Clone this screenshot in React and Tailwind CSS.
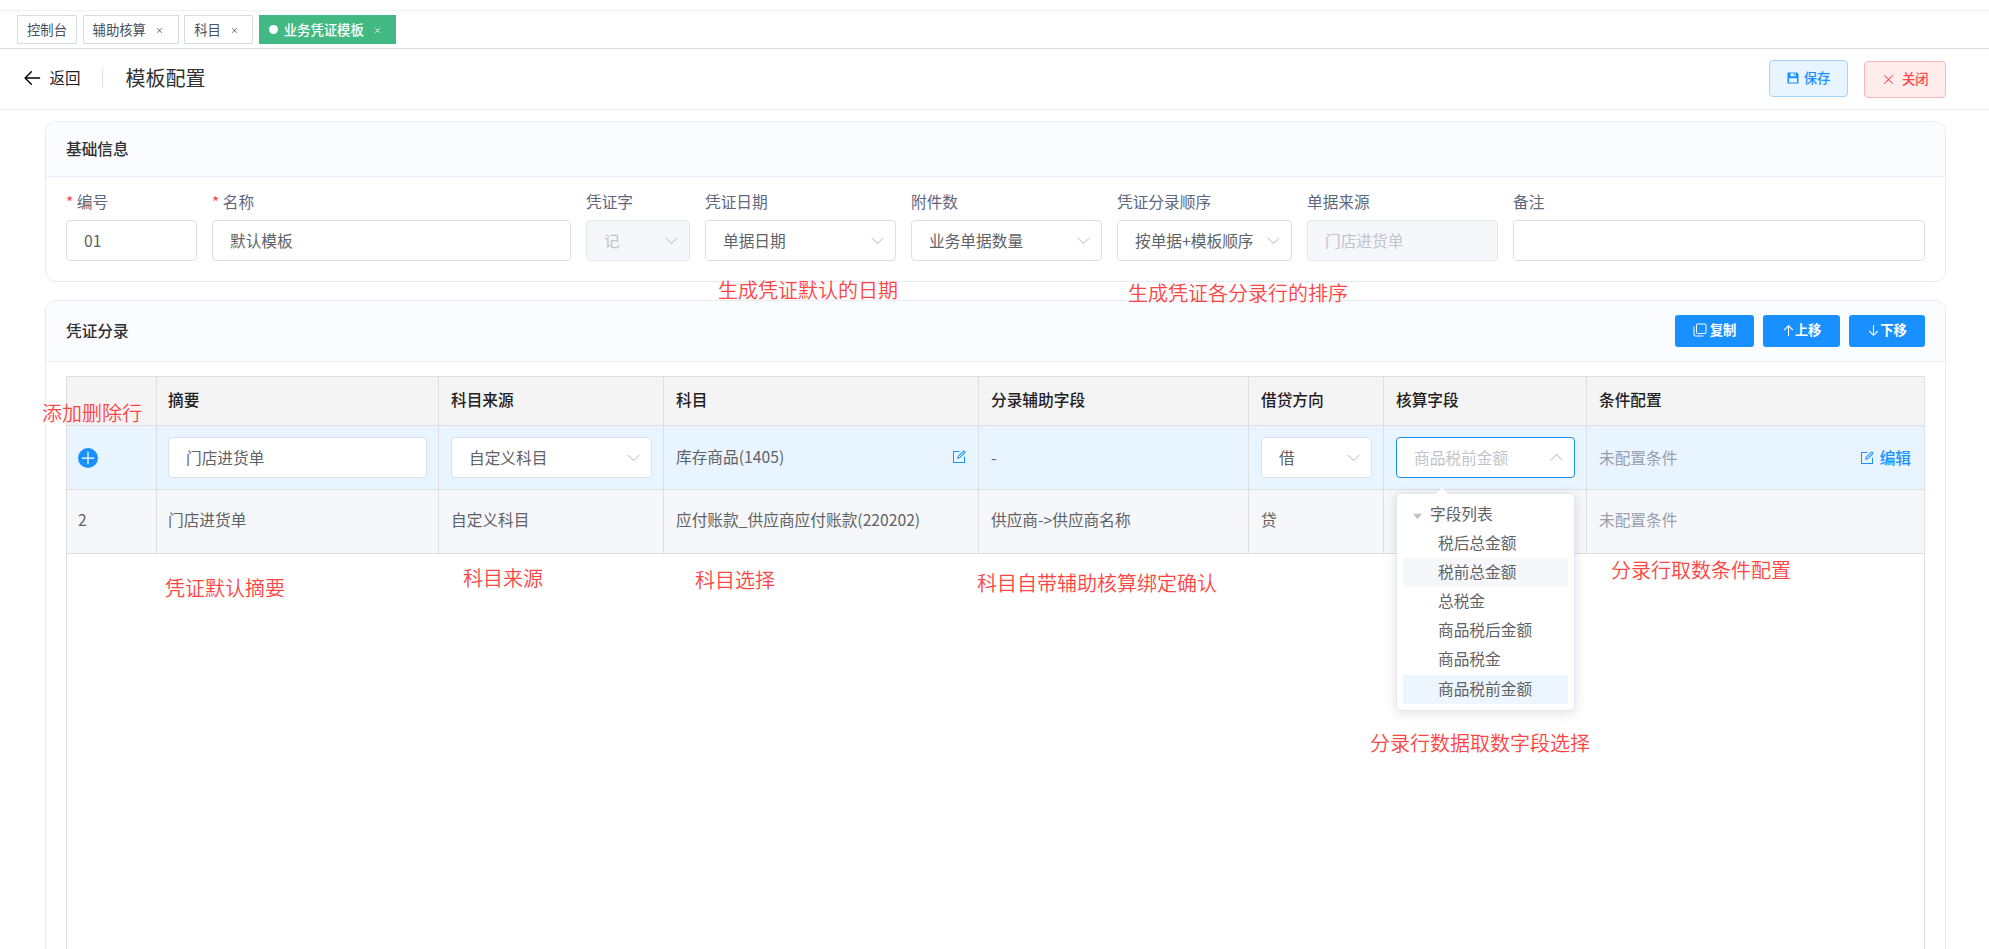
const ICONS = {
  arrowDown: [
    'M831.872 340.864 512 652.672 192.128 340.864a30.592 30.592 0 0 0-42.752 0 29.12 29.12 0 0 0 0 41.6L489.664 714.24a32 32 0 0 0 44.672 0l340.288-331.712a29.12 29.12 0 0 0 0-41.728 30.592 30.592 0 0 0-42.752 0z',
  ],
  back: [
    'M224 480h640a32 32 0 1 1 0 64H224a32 32 0 0 1 0-64z',
    'm237.248 512 265.408 265.344a32 32 0 0 1-45.312 45.312l-288-288a32 32 0 0 1 0-45.312l288-288a32 32 0 1 1 45.312 45.312L237.248 512z',
  ],
  edit: [
    'M832 512a32 32 0 1 1 64 0v352a32 32 0 0 1-32 32H160a32 32 0 0 1-32-32V160a32 32 0 0 1 32-32h352a32 32 0 0 1 0 64H192v640h640V512z',
    'm469.952 554.24 52.8-7.552L847.104 222.4a32 32 0 1 0-45.248-45.248L477.44 501.44l-7.552 52.8zm422.4-422.4a96 96 0 0 1 0 135.808l-331.84 331.84a32 32 0 0 1-18.112 9.088L436.8 623.68a32 32 0 0 1-36.224-36.224l15.104-105.6a32 32 0 0 1 9.024-18.112l331.904-331.84a96 96 0 0 1 135.744 0z',
  ],
  caret: ['m192 384 320 384 320-384z'],
  plus: ['M480 480V192h64v288h288v64H544v288h-64V544H192v-64z'],
  close: [
    'M764.288 214.592 512 466.88 259.712 214.592a31.936 31.936 0 0 0-45.12 45.12L466.752 512 214.528 764.224a31.936 31.936 0 1 0 45.12 45.184L512 557.184l252.288 252.288a31.936 31.936 0 0 0 45.12-45.12L557.12 512.064l252.288-252.352a31.936 31.936 0 1 0-45.12-45.184z',
  ],
}

const TABS = [
  { name: '控制台', width: 'w-[60px]' },
  { name: '辅助核算', width: 'w-24', closable: true },
  { name: '科目', width: 'w-[69px]', closable: true },
  { name: '业务凭证模板', width: 'w-[137px]', closable: true, active: true },
]

const FIELDS = [
  { label: '编号', value: '01', required: true },
  { label: '名称', value: '默认模板', required: true },
  { label: '凭证字', value: '记', select: true, disabled: true },
  { label: '凭证日期', value: '单据日期', select: true },
  { label: '附件数', value: '业务单据数量', select: true },
  { label: '凭证分录顺序', value: '按单据+模板顺序', select: true },
  { label: '单据来源', value: '门店进货单', disabled: true },
  { label: '备注', value: '' },
]

const HEADERS = ['', '摘要', '科目来源', '科目', '分录辅助字段', '借贷方向', '核算字段', '条件配置']

const OPTIONS = ['税后总金额', '税前总金额', '总税金', '商品税后金额', '商品税金', '商品税前金额']

const NOTES = [
  { text: '生成凭证默认的日期', pos: 'left-[718px] top-[275px]' },
  { text: '生成凭证各分录行的排序', pos: 'left-[1128px] top-[278px]' },
  { text: '添加删除行', pos: 'left-[42px] top-[398px]' },
  { text: '凭证默认摘要', pos: 'left-[165px] top-[573px]' },
  { text: '科目来源', pos: 'left-[463px] top-[563px]' },
  { text: '科目选择', pos: 'left-[695px] top-[565px]' },
  { text: '科目自带辅助核算绑定确认', pos: 'left-[977px] top-[568px]' },
  { text: '分录行取数条件配置', pos: 'left-[1611px] top-[555px]' },
  { text: '分录行数据取数字段选择', pos: 'left-[1370px] top-[728px]' },
]

const GRID = 'grid grid-cols-[90px_282px_225px_315px_270px_135px_203px_338px]'

function Icon({ name, className }) {
  return (
    <svg viewBox="0 0 1024 1024" fill="currentColor" className={`shrink-0 ${className}`}>
      {ICONS[name].map((d) => (
        <path key={d} d={d} />
      ))}
    </svg>
  )
}

function SaveIcon() {
  return (
    <svg viewBox="0 0 12 12" className="h-3 w-3 shrink-0" fill="currentColor">
      <path fillRule="evenodd" d="M1 .5h9L11.5 2v9a.5.5 0 0 1-.5.5H1a.5.5 0 0 1-.5-.5V1A.5.5 0 0 1 1 .5zM3.4 1.2v3h5.2v-3zM2 6.2v4.3h8V6.2z" />
      <path d="M6.6 1.4h1.2v1.8H6.6z" />
    </svg>
  )
}

function CopyIcon() {
  return (
    <svg viewBox="0 0 14 14" className="h-3.5 w-3.5 shrink-0" fill="none" stroke="currentColor">
      <rect x="3.5" y="1" width="9.5" height="9.5" rx="1" />
      <path d="M1 3.5V12a1 1 0 0 0 1 1h8.5" />
    </svg>
  )
}

function MoveIcon({ down }) {
  return (
    <svg viewBox="0 0 13 13" className={`h-[13px] w-[13px] shrink-0 ${down ? 'rotate-180' : ''}`} fill="none" stroke="currentColor" strokeWidth="1.1">
      <path d="M6.5 12V1.7M2.2 6l4.3-4.3L10.8 6" />
    </svg>
  )
}

function Box({ value, select, disabled, open, className = '' }) {
  let look = 'border-[#dcdfe6] bg-white text-[#606266]'
  if (disabled) look = 'border-[#e4e7ed] bg-[#f5f7fa] text-[#c0c4cc]'
  if (open) look = 'border-[#1890ff] bg-white text-[#bfc3cb]'
  return (
    <div className={`flex h-[41px] items-center justify-between rounded border pl-[17px] pr-[9.5px] ${look} ${className}`}>
      <span className="whitespace-nowrap">{value}</span>
      {select && <Icon name="arrowDown" className={`h-[17px] w-[17px] text-[#c0c4cc] ${open ? 'rotate-180' : ''}`} />}
    </div>
  )
}

function Tabs() {
  return (
    <div className="flex h-[39px] shrink-0 border-b border-[#d8dce5] pl-[17px] pt-[5px] text-[13.33px] text-[#495060] shadow-[inset_0_2px_2px_-1px_rgba(0,0,0,0.06)]">
      {TABS.map((tab) => (
        <div
          key={tab.name}
          className={`mr-[5.6px] flex h-[29px] shrink-0 items-center border pl-[9px] ${tab.width} ${
            tab.active ? 'border-[#42b983] bg-[#42b983] font-medium text-white' : 'border-[#d8dce5] bg-white'
          }`}
        >
          {tab.active && <span className="mr-1.5 h-[9px] w-[9px] rounded-full bg-white" />}
          {tab.name}
          {tab.closable && <Icon name="close" className="ml-[9.5px] mt-[2px] h-[9px] w-[9px]" />}
        </div>
      ))}
    </div>
  )
}

function PageHeader() {
  return (
    <div className="flex h-[61px] shrink-0 items-center border-b border-[#ebeef5] pb-[2px] pl-[21px] pr-[43px] text-[#303133]">
      <Icon name="back" className="h-[22px] w-[22px] text-black" />
      <span className="ml-[6.5px] text-[15.5px] text-[#1f2022]">返回</span>
      <span className="ml-[21px] h-[18px] w-px bg-[#dcdfe6]" />
      <span className="ml-[23px] text-[20px]">模板配置</span>
      <div className="ml-auto flex text-[13.33px] font-medium">
        <button className="flex h-[37px] w-[79px] items-center justify-center gap-[5px] rounded border border-[#a3d3ff] bg-[#e8f4ff] text-[#1890ff]">
          <SaveIcon />
          保存
        </button>
        <button className="relative top-px ml-4 flex h-[37px] w-[82px] items-center justify-center gap-[5.5px] rounded border border-[#ffb6b6] bg-[#ffeded] text-[#ff4949]">
          <Icon name="close" className="h-[15px] w-[15px]" />
          关闭
        </button>
      </div>
    </div>
  )
}

function BasicInfo() {
  return (
    <section className="h-[161px] shrink-0 overflow-hidden rounded-[11px] border border-[#e6ebf5]">
      <h2 className="flex h-[55px] items-center border-b border-[#ebeef5] bg-[#fafcff] pb-px pl-5 font-medium text-[#303133]">基础信息</h2>
      <div className="grid grid-cols-[146px_374px_119px_206px_206px_190px_206px_412px] pl-5">
        {FIELDS.map((f) => (
          <div key={f.label} className="pr-[15px] last:pr-0">
            <div className="mt-2 mb-px flex h-[34px] items-center text-[#5f6780]">
              {f.required && <span className="mr-[3.5px] text-[#ff4949]">*</span>}
              {f.label}
            </div>
            <Box value={f.value} select={f.select} disabled={f.disabled} />
          </div>
        ))}
      </div>
    </section>
  )
}

function FieldTree() {
  return (
    <div className="absolute left-3 top-[67px] z-10 h-[218px] w-[179px] rounded border border-[#e4e7ed] bg-white px-1.5 pt-[6px] text-[#606266] shadow-[0_2px_12px_rgba(0,0,0,0.12)]">
      <span className="absolute -top-[6px] left-[39px] border-x-[6px] border-b-[6px] border-x-transparent border-b-white" />
      <div className="flex h-[29px] items-center pb-[2px] pl-[7px]">
        <Icon name="caret" className="mr-[5px] mt-[4px] h-[15px] w-[15px] text-[#c0c4cc]" />
        字段列表
      </div>
      {OPTIONS.map((o, i) => (
        <div
          key={o}
          className={`flex h-[29.2px] items-center pb-[2px] pl-[35px] ${i === 1 ? 'bg-[#f5f7fa]' : ''} ${i === 5 ? 'bg-[#edf6ff]' : ''}`}
        >
          {o}
        </div>
      ))}
    </div>
  )
}

function Cell({ children, className = '' }) {
  return (
    <div className={`flex items-center border-r border-b border-[#dfdfdf] pl-3 pr-[11px] nth-1:pl-[11px] nth-2:pl-[11px] ${className}`}>
      {children}
    </div>
  )
}

function EntryTable() {
  return (
    <div className="mx-5 mt-[14px] h-[700px] border-x border-t border-[#dfdfdf] text-[#606266]">
      <div className={`${GRID} h-[49px] bg-[#f4f4f4] font-medium text-[#1f2022]`}>
        {HEADERS.map((h, i) => (
          <Cell key={i} className="pb-[2px]">
            {h}
          </Cell>
        ))}
      </div>
      <div className={`${GRID} h-16 bg-[#e8f4ff]`}>
        <Cell>
          <span className="flex h-5 w-5 items-center justify-center rounded-full bg-[#1890ff] text-white">
            <Icon name="plus" className="h-5 w-5" />
          </span>
        </Cell>
        <Cell>
          <Box value="门店进货单" className="w-full" />
        </Cell>
        <Cell>
          <Box value="自定义科目" select className="w-full" />
        </Cell>
        <Cell className="justify-between pb-[2px]">
          <span>库存商品(1405)</span>
          <Icon name="edit" className="h-4 w-4 text-[#1890ff]" />
        </Cell>
        <Cell>-</Cell>
        <Cell>
          <Box value="借" select className="w-full" />
        </Cell>
        <Cell className="relative">
          <Box value="商品税前金额" select open className="w-full" />
          <FieldTree />
        </Cell>
        <Cell className="justify-between">
          <span className="text-[#9a9fab]">未配置条件</span>
          <span className="mr-[2px] flex items-center gap-[5px] font-medium text-[#1890ff]">
            <Icon name="edit" className="h-4 w-4" />
            编辑
          </span>
        </Cell>
      </div>
      <div className={`${GRID} h-16 bg-[#f5f7fa]`}>
        <Cell className="pb-[3px]">2</Cell>
        <Cell className="pb-[3px]">门店进货单</Cell>
        <Cell className="pb-[3px]">自定义科目</Cell>
        <Cell className="pb-[3px]">应付账款_供应商应付账款(220202)</Cell>
        <Cell className="pb-[3px]">供应商-&gt;供应商名称</Cell>
        <Cell className="pb-[3px]">贷</Cell>
        <Cell />
        <Cell className="pb-[3px] text-[#9a9fab]">未配置条件</Cell>
      </div>
    </div>
  )
}

function Entries() {
  return (
    <section className="mt-[18px] h-[800px] shrink-0 rounded-t-[11px] border border-[#e6ebf5]">
      <div className="flex h-[61px] items-center rounded-t-[10px] border-b border-[#ebeef5] bg-[#fafcff] px-5">
        <h2 className="font-medium text-[#303133]">凭证分录</h2>
        <div className="ml-auto flex gap-[9px] text-[13.33px] font-bold text-white">
          <button className="flex h-8 w-[79px] items-center justify-center gap-[3px] rounded-[3px] bg-[#1890ff] pb-[2px]">
            <CopyIcon />
            复制
          </button>
          <button className="flex h-8 w-[77px] items-center justify-center rounded-[3px] bg-[#1890ff] pb-[2px]">
            <MoveIcon />
            上移
          </button>
          <button className="flex h-8 w-[76px] items-center justify-center rounded-[3px] bg-[#1890ff] pb-[2px]">
            <MoveIcon down />
            下移
          </button>
        </div>
      </div>
      <EntryTable />
    </section>
  )
}

export default function App() {
  return (
    <div className="relative flex h-[949px] w-[1989px] flex-col overflow-hidden bg-white pt-[10px] font-['Noto_Sans_CJK_SC',sans-serif] text-[15.7px] leading-none">
      <Tabs />
      <PageHeader />
      <main className="flex flex-col pl-[45px] pr-[43px] pt-[11px]">
        <BasicInfo />
        <Entries />
      </main>

      {/* hints laid over the form */}
      {NOTES.map((n) => (
        <span key={n.text} className={`absolute z-20 whitespace-nowrap text-[20px] font-[350] leading-[30px] text-[#ff4444] ${n.pos}`}>
          {n.text}
        </span>
      ))}
    </div>
  )
}
